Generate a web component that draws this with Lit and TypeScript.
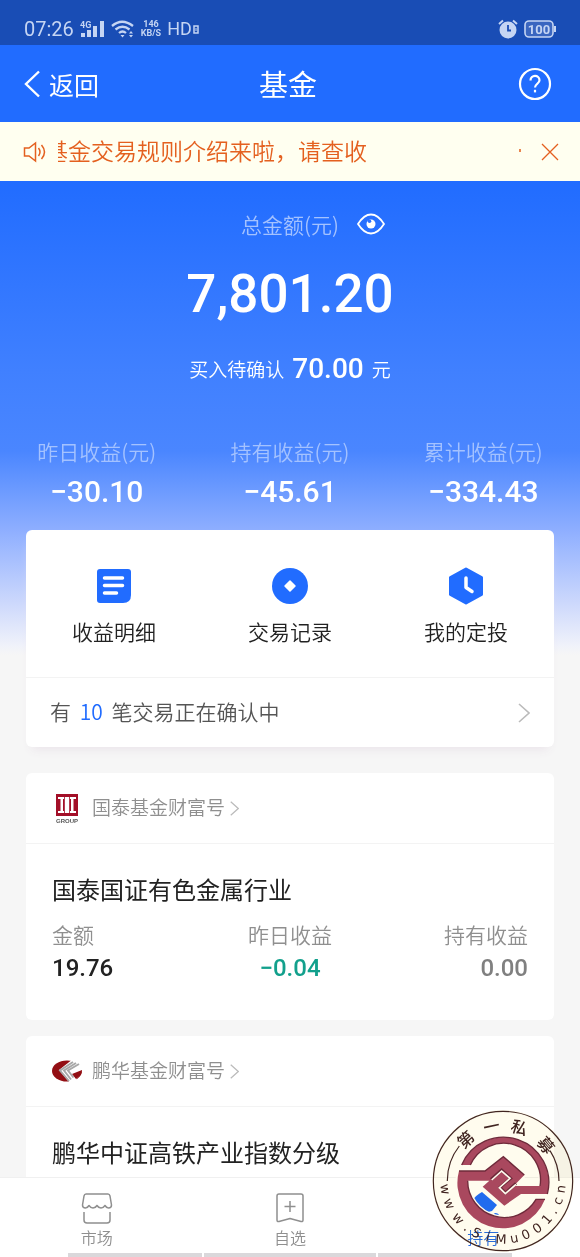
import { LitElement, html, svg, css } from "lit";
import { customElement } from "lit/decorators.js";

interface Fund {
  company: string;
  name: string;
  logo: "guotai" | "penghua";
  amount?: string;
  day?: string;
  held?: string;
}

const STATS = [
  { label: "昨日收益(元)", value: "−30.10" },
  { label: "持有收益(元)", value: "−45.61" },
  { label: "累计收益(元)", value: "−334.43" },
];

const FUNDS: Fund[] = [
  { company: "国泰基金财富号", name: "国泰国证有色金属行业", logo: "guotai", amount: "19.76", day: "−0.04", held: "0.00" },
  { company: "鹏华基金财富号", name: "鹏华中证高铁产业指数分级", logo: "penghua" },
];

const chevron = (w: number, h: number) => html`<svg class="chevron" width=${w} height=${h} viewBox="0 0 12 20" aria-hidden="true">
  <path d="M1 1l10 9-10 9" fill="none" stroke="currentColor" stroke-width="1.6" /></svg>`;

const guotaiLogo = html`<svg width="32" height="32" viewBox="0 0 32 32" aria-hidden="true">
  <rect x="5" y="2" width="22" height="22" fill="#a30f28" />
  <path d="M7 5h6v2h-1v12h1v2H7v-2h2.500V7H7zM13.800 5h4.400v16h-4.400zM19 5h6v2h-2.500v12H25v2h-6v-2h1V7h-1z" fill="#fff" />
  <text x="16" y="31" text-anchor="middle" font-family="Liberation Sans" font-size="6" font-weight="700" fill="#555">GROUP</text>
</svg>`;

const penghuaLogo = html`<svg width="32" height="32" viewBox="0 0 32 32" aria-hidden="true">
  <ellipse cx="16" cy="16" rx="15" ry="10.500" fill="#930f14" />
  <path d="M22 4L8 15l11 13h4l8-12V5z" fill="#fff" />
  <path d="M31 15c0 4-3 7-6 9l-4-5z" fill="#930f14" />
  <path d="M22 7L9 15.500 18 26M25 8l-12 7.500L20 24.500M28 9l-11 6.500 5.500 7" fill="none" stroke="#a8a8a8" stroke-width="1.900" />
</svg>`;

const ringText = (chars: string, angles: number[], radius: number, size: number, inward: boolean) =>
  [...chars].map((c, i) => {
    const a = (angles[i] * Math.PI) / 180;
    const x = 211 + radius * Math.sin(a);
    const y = 211 - radius * Math.cos(a);
    const turn = inward ? angles[i] - 180 : angles[i];
    return svg`<text transform="translate(${x} ${y}) rotate(${turn})" y=${size * 0.36} text-anchor="middle" font-size=${size}>${c}</text>`;
  });

@customElement("fund-seal")
export class FundSeal extends LitElement {
  static styles = css`
    :host { display: block; width: 142px; height: 142px; pointer-events: none; }
    .stack { display: grid; width: 100%; height: 100%; }
    .disc, .art { grid-area: 1 / 1; width: 100%; height: 100%; }
    .disc { border-radius: 50%; background: #fffcee; mix-blend-mode: multiply; }
    .art { display: block; position: relative; fill: #402420; font-weight: 400; font-family: "DejaVu Sans", sans-serif; }
    .han { font-family: "Noto Sans CJK SC", sans-serif; font-weight: 500; }
  `;
  render() {
    return html`<div class="stack"><div class="disc"></div>
      <svg class="art" viewBox="-2 -2 426 426" aria-hidden="true">
        <circle cx="211" cy="211" r="209" fill="none" stroke="#402420" stroke-width="3.500" />
        <path d="M44 211A168 168 0 0 1 80 106M379 211A168 168 0 0 0 352 120" fill="none" stroke="#402420" stroke-width="3.500" />
        <g transform="translate(75 63)">
          <path d="M4 118H82L137 75 200 130 168 163H247A110 110 0 0 0 38 100H12A136 136 0 0 1 269 187H190L140 222 75 165 95 147H30A110 110 0 0 0 235 203H262A136 136 0 0 1 4 118Z"
            fill="#a9485e" stroke="#fffcee" stroke-width="12" paint-order="stroke" />
          <path d="M12 100A136 136 0 0 1 269 187M4 118H82L137 75 200 130M247 163A110 110 0 0 0 38 100M30 147A110 110 0 0 0 235 203H262" fill="none" stroke="#6e2a3a" stroke-width="4" />
          <path d="M100 143L132 115 159 140 127 167 143 184 175 155" fill="none" stroke="#6e2a3a" stroke-width="9" />
          <path d="M102 145L132 118 157 140 125 168 143 186 175 158" fill="none" stroke="#fffcee" stroke-width="5" />
        </g>
        <g class="han">${ringText("第一私募", [-42, -12, 17, 50], 167, 49, false)}</g>
        <g>${ringText("www.SiMu001.cn", [262, 247, 230, 218, 207, 195, 182, 169, 157, 144, 131, 121, 110, 98], 174, 39, true)}</g>
      </svg></div>`;
  }
}

@customElement("app-root")
export class AppRoot extends LitElement {
  static styles = css`
    :host {
      display: flex; flex-direction: column; height: 100vh; min-width: 0; overflow: hidden;
      background: #f6f6f6; color: #222; position: relative;
      font-family: "Noto Sans CJK SC", sans-serif; font-size: 21px; line-height: 30px; font-weight: 350;
    }
    * { box-sizing: border-box; }
    button, a { font: inherit; color: inherit; background: none; border: 0; padding: 0; margin: 0; text-decoration: none; }
    button { cursor: pointer; }
    svg { display: block; flex: none; }
    h1, h2, p, dl, dd, dt { margin: 0; font-weight: inherit; font-size: inherit; }
    .num { font-family: Roboto, sans-serif; font-weight: 500; }

    .status { display: flex; justify-content: space-between; align-items: flex-end; height: 45px; flex: none; padding: 0 24px 4px; background: #194db5; color: #c5d5f3; font-family: Roboto, sans-serif; font-weight: 400; }
    .status-group { display: flex; align-items: center; gap: 6px; height: 24px; }
    .clock { font-size: 20px; line-height: 24px; }
    .speed { font-size: 9px; line-height: 9px; font-weight: 700; text-align: center; }
    .hd { display: flex; align-items: center; gap: 1px; font-size: 18px; line-height: 24px; }

    .bar { display: grid; grid-template-columns: 1fr auto 1fr; align-items: center; height: 77px; flex: none; padding: 0 28px 0 24px; background: #216cff; color: #fff; font-weight: 400; }
    .back { display: flex; align-items: center; gap: 8px; font-size: 25px; justify-self: start; }
    .title { font-size: 29px; line-height: 40px; padding-bottom: 2px; }
    .help { justify-self: end; }

    .notice { display: flex; align-items: center; height: 59px; flex: none; padding: 0 21px 0 23px; background: #fffff0; color: #e4601f; }
    .marquee { flex: 1; min-width: 0; overflow: hidden; display: flex; align-items: center; justify-content: space-between; margin: 0 20px 0 11px; padding-bottom: 3px; font-size: 23px; line-height: 34px; white-space: nowrap; }
    .marquee-text { margin-left: -13px; }
    .marquee-next { width: 2px; height: 3px; background: #e98650; }

    .content { flex: 1; min-height: 0; overflow: hidden auto; scrollbar-width: none; padding: 0 26px;
      background: linear-gradient(#216cff 0, #4080ff 190px, #4a86ff 270px, #8fafff 350px, #cfdafc 425px, #f0f2fa 465px, #f6f6f6 474px) no-repeat; background-size: 100% 474px; }
    .total-label { display: flex; justify-content: center; align-items: center; gap: 18px; padding: 28px 0 0 46px; color: #a4c2ff; }
    .total { text-align: center; font-size: 53px; line-height: 70px; padding-top: 20px; color: #fff; }
    .pending { display: flex; justify-content: center; align-items: center; gap: 8px; margin-top: 22px; font-size: 19px; line-height: 36px; color: #fff; }
    .pending .num { font-size: 28px; }
    .stats { display: grid; grid-template-columns: repeat(3, 1fr); margin: 49px -26px 0; text-align: center; color: #fff; }
    .stats dt { color: #a4c2ff; }
    .stats dd { font-size: 30px; line-height: 52px; }

    .card { background: #fff; border-radius: 6px; overflow: hidden; }
    .quick { margin-top: 12px; box-shadow: 0 8px 10px -6px #e9e2e9; }
    .actions { display: grid; grid-template-columns: repeat(3, 1fr); border-bottom: 1px solid #f3f3f3; height: 148px; }
    .action { display: flex; flex-direction: column; align-items: center; gap: 11px; padding-top: 37px; }
    .confirming { display: flex; justify-content: space-between; align-items: center; width: 100%; height: 69px; padding: 0 24px; color: #555; }
    .confirming-text { padding-bottom: 4px; }
    .count { color: #216cff; padding: 0 4px; }
    .chevron { color: #bbb; }

    .fund { margin-top: 26px; }
    .fund + .fund { margin-top: 16px; }
    .company { display: flex; align-items: center; width: 100%; height: 71px; padding: 0 26px 0 25px; border-bottom: 1px solid #f3f3f3; color: #8f8f8f; font-size: 19px; }
    .company-name { margin: 0 5px 0 9px; padding-bottom: 2px; }
    .detail { padding: 27px 26px 33px; }
    .fund-name { font-size: 24px; line-height: 36px; font-weight: 400; color: #222; }
    .figures { display: grid; grid-template-columns: repeat(3, 1fr); margin-top: 12px; text-align: center; }
    .figures div:first-child { text-align: left; }
    .figures div:last-child { text-align: right; }
    .figures dt { color: #8f8f8f; }
    .figures dd { font-size: 24px; line-height: 38px; color: #222; }
    .figures .down { color: #12a08c; }
    .figures .flat { color: #808080; }

    .nav { display: grid; grid-template-columns: repeat(3, 1fr); flex: none; height: 76px; background: #fff; border-top: 1px solid #f0f0f0; color: #8f8f8f; font-size: 16px; line-height: 24px; }
    .tab { display: flex; flex-direction: column; align-items: center; gap: 1px; padding-top: 14px; }
    .active { color: #2a6ee8; }
    .strip { display: grid; grid-template-columns: 134fr 172fr 134fr; gap: 2px; height: 4px; flex: none; padding: 0 68px; background: #fff; }
    .strip-part { background: #dad8db; }
    .seal { position: absolute; right: 6px; bottom: 5px; }
  `;

  render() {
    return html`
      <div class="status">
        <div class="status-group">
          <span class="clock">07:26</span>
          <svg width="25" height="18" viewBox="0 0 25 18" fill="currentColor" aria-hidden="true">
            <text x="0" y="8" font-size="9" font-weight="700" font-family="Roboto">4G</text>
            <rect x="1" y="13" width="4" height="4" /><rect x="7" y="10" width="4" height="7" /><rect x="13" y="6" width="4" height="11" /><rect x="20" y="1" width="4" height="16" />
          </svg>
          <svg width="24" height="18" viewBox="0 0 24 18" aria-hidden="true">
            <path d="M1 6Q11-2.500 22 6M4.500 9.500Q11.500 4 18.500 9.500M8 13q3.500-3 7 0" fill="none" stroke="currentColor" stroke-width="2.300" />
            <path d="M9.500 15h4l-2 2.500zM18 13.500l2-2.500 2 2.500zM18 15l2 2.500 2-2.500z" fill="currentColor" />
          </svg>
          <span class="speed">146<br />KB/S</span>
          <span class="hd">HD<svg width="6" height="10" viewBox="0 0 6 10" aria-hidden="true"><path d="M1 2h4v7H1z" fill="none" stroke="currentColor" stroke-width="1.500" /><path d="M3 4v3" stroke="currentColor" /></svg></span>
        </div>
        <div class="status-group">
          <svg width="20" height="20" viewBox="0 0 20 20" aria-hidden="true">
            <circle cx="10" cy="11" r="8.500" fill="currentColor" />
            <path d="M1 5l4-3.500M19 5l-4-3.500" stroke="currentColor" stroke-width="2" />
            <path d="M10 6v5.500h3" fill="none" stroke="#194db5" stroke-width="1.800" />
          </svg>
          <svg width="32" height="18" viewBox="0 0 32 18" aria-hidden="true">
            <rect x="1" y="1" width="28" height="16" rx="4" fill="#3a66c0" stroke="currentColor" stroke-width="1.600" />
            <rect x="30" y="6" width="2" height="6" fill="currentColor" />
            <text x="15" y="13.500" text-anchor="middle" font-size="13" font-weight="700" font-family="Roboto" fill="currentColor">100</text>
          </svg>
        </div>
      </div>

      <header class="bar">
        <button class="back">
          <svg width="17" height="28" viewBox="0 0 17 28" aria-hidden="true"><path d="M15 1.500L2 14l13 12.500" fill="none" stroke="currentColor" stroke-width="2.400" /></svg>
          <span>返回</span>
        </button>
        <h1 class="title">基金</h1>
        <button class="help" aria-label="帮助">
          <svg width="34" height="34" viewBox="0 0 34 34" fill="none" stroke="currentColor" stroke-width="2.200">
            <circle cx="17" cy="17" r="15" />
            <path d="M12.500 13.500c0-6 9-6 9-.3 0 3.300-4.500 3.800-4.500 7.300" />
            <path d="M17 22.800v2.600" />
          </svg>
        </button>
      </header>

      <div class="notice">
        <svg width="24" height="24" viewBox="0 0 24 24" fill="none" stroke="currentColor" stroke-width="1.500" aria-hidden="true">
          <path d="M1.500 8v8h4.500l6.500 5V3L6 8zM15.500 8q3 4 0 8M18.500 5q6 7 0 14" />
        </svg>
        <div class="marquee"><span class="marquee-text">基金交易规则介绍来啦，请查收</span><span class="marquee-next"></span></div>
        <button aria-label="关闭"><svg width="18" height="18" viewBox="0 0 18 18"><path d="M1 1l16 16M17 1L1 17" stroke="currentColor" stroke-width="1.300" /></svg></button>
      </div>

      <main class="content">
        <div class="total-label">
          <span>总金额(元)</span>
          <button aria-label="隐藏金额">
            <svg width="28" height="22" viewBox="0 0 28 22">
              <path d="M1 11Q7 1.500 14 1.500T27 11Q21 20.500 14 20.500T1 11z" fill="none" stroke="#fff" stroke-width="1.800" />
              <circle cx="14" cy="11" r="4.500" fill="#fff" /><circle cx="12.500" cy="8.200" r="1.800" fill="#2b72ff" />
            </svg>
          </button>
        </div>
        <p class="total num">7,801.20</p>
        <p class="pending"><span>买入待确认</span><span class="num">70.00</span><span>元</span></p>
        <dl class="stats">${STATS.map((s) => html`<div><dt>${s.label}</dt><dd class="num">${s.value}</dd></div>`)}</dl>

        <section class="card quick">
          <div class="actions">
            <button class="action">
              <svg width="38" height="38" viewBox="0 0 38 38"><path d="M5 2h28a3 3 0 0 1 3 3v23q0 8-8 8H5a3 3 0 0 1-3-3V5a3 3 0 0 1 3-3z" fill="#216cff" /><path d="M9.500 11h18M9.500 18.500h18M9.500 26h12" stroke="#fff" stroke-width="3.500" stroke-linecap="round" /></svg>
              <span>收益明细</span>
            </button>
            <button class="action">
              <svg width="38" height="38" viewBox="0 0 38 38"><circle cx="19" cy="19" r="18" fill="#216cff" /><path d="M19 14l5 5-5 5-5-5z" fill="#fff" stroke="#fff" stroke-width="1.500" stroke-linejoin="round" /></svg>
              <span>交易记录</span>
            </button>
            <button class="action">
              <svg width="38" height="38" viewBox="0 0 38 38"><path d="M19 2l15.500 8.500v17L19 36 3.500 27.500v-17z" fill="#216cff" stroke="#216cff" stroke-width="3" stroke-linejoin="round" /><path d="M19 11v9.500l6 4" fill="none" stroke="#fff" stroke-width="3.500" stroke-linecap="round" stroke-linejoin="round" /></svg>
              <span>我的定投</span>
            </button>
          </div>
          <button class="confirming"><span class="confirming-text">有 <span class="count">10</span> 笔交易正在确认中</span>${chevron(12, 22)}</button>
        </section>

        ${FUNDS.map((f) => html`<section class="card fund">
          <button class="company">${f.logo === "guotai" ? guotaiLogo : penghuaLogo}<span class="company-name">${f.company}</span>${chevron(9, 15)}</button>
          <div class="detail">
            <h2 class="fund-name">${f.name}</h2>
            ${f.amount ? html`<dl class="figures">
              <div><dt>金额</dt><dd class="num">${f.amount}</dd></div>
              <div><dt>昨日收益</dt><dd class="num down">${f.day}</dd></div>
              <div><dt>持有收益</dt><dd class="num flat">${f.held}</dd></div>
            </dl>` : ""}
          </div>
        </section>`)}
      </main>

      <nav class="nav">
        <a class="tab" href="#market">
          <svg width="32" height="32" viewBox="0 0 32 32" fill="none" stroke="currentColor" stroke-width="1.500"><path d="M5 2h22q1.500 0 2 2l1.500 9q0 3-3 3-2 0-3.500-2.500-1.800 2.500-4 2.500-2.500 0-4-2.500-1.500 2.500-4 2.500-2.200 0-4-2.500Q6.500 16 4.500 16q-3 0-3-3L3 4q.5-2 2-2zM3 20v8q0 3 3 3h20q3 0 3-3v-8" stroke-linejoin="round" /></svg>
          <span>市场</span>
        </a>
        <a class="tab" href="#watch">
          <svg width="32" height="32" viewBox="0 0 32 32" fill="none" stroke="currentColor" stroke-width="1.500"><path d="M5 2h22q2 0 2 2v24q0 2-2 1.500L16 26.500 5 29.500q-2 .5-2-1.500V4q0-2 2-2zM16 9v11M10.500 14.500h11" stroke-linejoin="round" /></svg>
          <span>自选</span>
        </a>
        <a class="tab active" href="#hold">
          <svg width="32" height="32" viewBox="0 0 32 32" fill="#216cff"><path d="M5 9q4-6 10-9l15 13-5 6-4 1-16-6z" /><path d="M20 27l8-6q4 0 4 3l-5 3z" /></svg>
          <span>持有</span>
        </a>
      </nav>
      <div class="strip"><span class="strip-part"></span><span class="strip-part"></span><span class="strip-part"></span></div>
      <fund-seal class="seal"></fund-seal>
    `;
  }
}
